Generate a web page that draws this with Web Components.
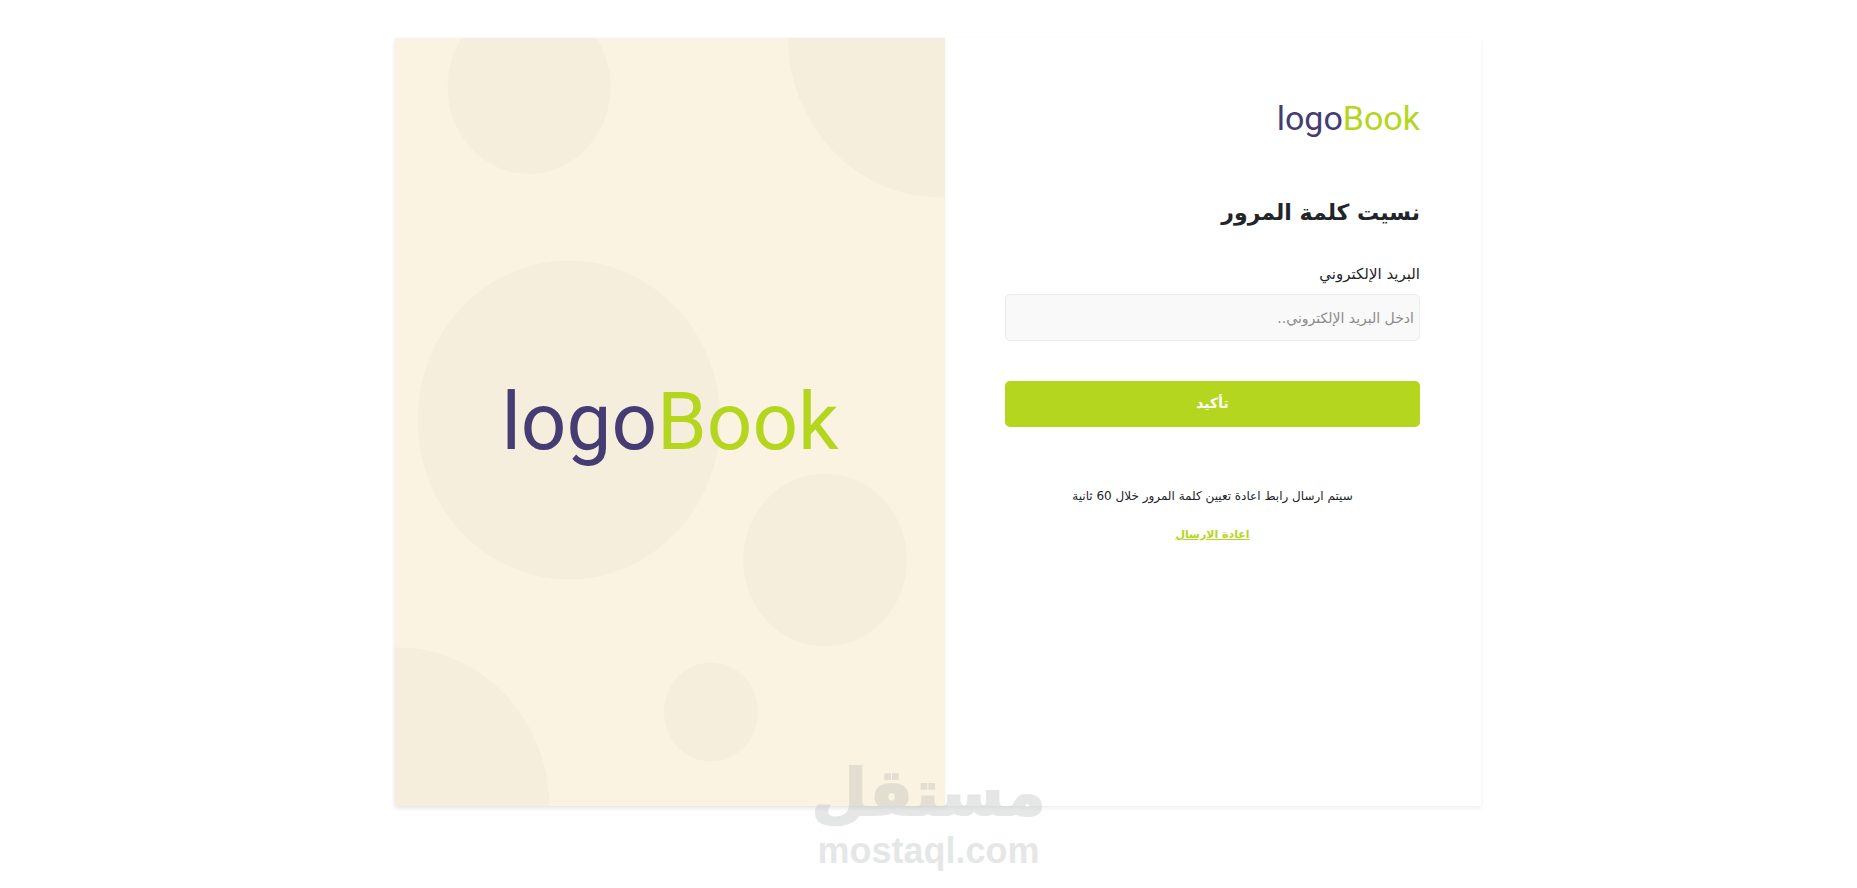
<!DOCTYPE html>
<html lang="ar" dir="rtl">
<head>
<meta charset="utf-8">
<meta name="viewport" content="width=device-width, initial-scale=1">
<title>logoBook</title>
<style>
  body { margin: 0; background: #fff; color: #212529; font-family: "DejaVu Sans", "Noto Sans", sans-serif; }
</style>
</head>
<body>
<reset-page></reset-page>
<script>
const define = (name, html) => customElements.define(name, class extends HTMLElement {
  constructor() {
    super();
    const t = document.createElement('template');
    t.innerHTML = html;
    this.attachShadow({ mode: 'open' }).append(t.content.cloneNode(true));
  }
});

define('brand-logo', `
  <style>
    :host { display: block; direction: ltr; font: 400 var(--logo-size, 34px)/1.2 Roboto, sans-serif; color: #463c74; white-space: nowrap; }
    b { font-weight: inherit; color: #b4d61e; }
  </style>
  <span>logo<b>Book</b></span>`);

define('bubble-panel', `
  <style>
    :host { display: grid; place-items: center; position: relative; overflow: hidden; background: #fbf3e1; box-shadow: 0 2px 5px rgba(30, 30, 90, .05); }
    svg { position: absolute; inset: 0; width: 100%; height: 100%; }
    div { position: relative; }
  </style>
  <svg viewBox="0 0 550 768" preserveAspectRatio="none" fill="#f6eedd" aria-hidden="true">
    <ellipse cx="134" cy="49" rx="81.5" ry="87"/>
    <ellipse cx="545" cy="0" rx="152" ry="159.5"/>
    <ellipse cx="174" cy="382" rx="151.5" ry="159.5"/>
    <ellipse cx="430" cy="522" rx="82" ry="86.5"/>
    <ellipse cx="3" cy="769" rx="151.5" ry="159.5"/>
    <ellipse cx="316" cy="674" rx="47" ry="49.5"/>
  </svg>
  <div><slot></slot></div>`);

define('email-field', `
  <style>
    :host { display: block; }
    label { display: block; font-size: 15px; line-height: 24px; margin-bottom: 8px; }
    input { display: block; box-sizing: border-box; width: 100%; height: 47px; padding: 2px 5px 0; border: 1px solid #ececec; border-radius: 5px; background: #f9f9f9; color: #212529; font: 14px "DejaVu Sans", sans-serif; text-align: right; }
    input::placeholder { color: #8b8b8b; opacity: 1; }
  </style>
  <label for="email">البريد الإلكتروني</label>
  <input id="email" type="email" dir="rtl" placeholder="ادخل البريد الإلكتروني..">`);

define('primary-button', `
  <style>
    :host { display: block; }
    button { display: block; width: 100%; height: 46px; padding: 0 0 2px; border: 0; border-radius: 5px; background: #b4d61e; color: #fff; font: 700 14px "DejaVu Sans", sans-serif; cursor: pointer; }
  </style>
  <button type="submit"><slot></slot></button>`);

define('resend-note', `
  <style>
    :host { display: block; text-align: center; font-size: 12px; line-height: 22px; }
    p { margin: 0 0 16px; }
    a { color: #b4d61e; font-size: 11px; font-weight: 700; text-decoration: underline; }
  </style>
  <p><slot></slot></p>
  <a href="#resend">اعادة الارسال</a>`);

define('reset-form', `
  <style>
    :host { display: block; box-sizing: border-box; padding: 60px 61px 60px 60px; }
    h1 { margin: 56px 0 31px; font-size: 22px; line-height: 36px; font-weight: 700; }
    brand-logo { text-align: right; }
    primary-button { margin-top: 40px; }
    resend-note { margin-top: 58px; }
  </style>
  <brand-logo></brand-logo>
  <h1>نسيت كلمة المرور</h1>
  <form>
    <email-field></email-field>
    <primary-button>تأكيد</primary-button>
  </form>
  <resend-note>سيتم ارسال رابط اعادة تعيين كلمة المرور خلال 60 ثانية</resend-note>`);

define('site-watermark', `
  <style>
    :host { position: absolute; inset: auto 0 16px; display: grid; justify-items: center; color: #b3bbb8; opacity: .34; pointer-events: none; font-weight: 700; }
    .ar { font-size: 64px; line-height: 74px; -webkit-text-stroke: 2px currentColor; }
    .en { direction: ltr; font: 700 36px/42px "Liberation Sans", sans-serif; }
  </style>
  <span class="ar">مستقل</span>
  <span class="en">mostaql.com</span>`);

define('reset-page', `
  <style>
    :host { display: block; position: relative; box-sizing: border-box; min-height: 100vh; padding: 38px 0 82px 19px; }
    main { display: grid; grid-template-columns: 536fr 550fr; max-width: 1086px; min-height: calc(100vh - 120px); margin: 0 auto; box-shadow: 0 2px 4px rgba(0, 0, 0, .07); }
    bubble-panel brand-logo { --logo-size: 80px; }
  </style>
  <main>
    <reset-form></reset-form>
    <bubble-panel><brand-logo></brand-logo></bubble-panel>
  </main>
  <site-watermark></site-watermark>`);
</script>
</body>
</html>
